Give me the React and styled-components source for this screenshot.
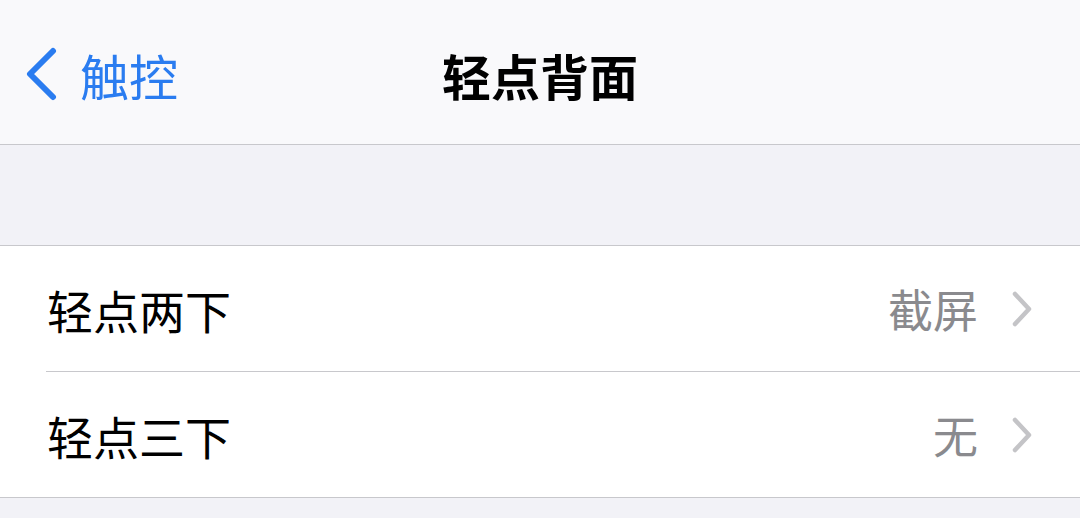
import React from 'react';
import styled, { createGlobalStyle } from 'styled-components';

//------------- Styling -------------//

const GlobalStyle = createGlobalStyle`
  html, body {
    margin: 0;
    padding: 0;
    background: #f2f2f7;
    font-family: "Noto Sans CJK SC", "Noto Sans", sans-serif;
  }
`;

const Page = styled.div`
  width: 1080px;
  height: 518px;
  overflow: hidden;
  background: #f2f2f7;
`;

const NavBar = styled.header`
  position: relative;
  height: 144px;
  background: #f9f9fb;
  border-bottom: 1px solid #c8c8cc;
  display: flex;
  align-items: center;
  justify-content: center;
`;

const BackButton = styled.div`
  position: absolute;
  left: 24px;
  top: 4px;
  bottom: 0;
  display: flex;
  align-items: center;
  gap: 22px;
  color: #2a7cf0;
  font-size: 49px;
  line-height: 1;
`;

const Title = styled.h1`
  margin: 4px 0 0;
  font-size: 49px;
  font-weight: 700;
  color: #000;
  line-height: 1;
`;

const Spacer = styled.div`
  height: 100px;
`;

const Group = styled.div`
  background: #fff;
  border-top: 1px solid #c8c8cc;
  border-bottom: 1px solid #c8c8cc;
  padding-left: 46px;
`;

const Row = styled.div`
  height: 125px;
  display: flex;
  align-items: center;
  padding-right: 48px;
  border-bottom: ${p => (p.$last ? 'none' : '1px solid #c8c8cc')};
`;

const Label = styled.span`
  flex: 1;
  font-size: 46px;
  color: #000;
  padding-left: 1px;
  line-height: 1;
`;

const Value = styled.span`
  font-size: 45px;
  color: #8a8a8e;
  margin-right: 34px;
  line-height: 1;
`;

//------------- Component -------------//

const BackChevron = () => (
  <svg width="34" height="54" viewBox="0 0 34 54">
    <path d="M29 4 L6 27 L29 50" fill="none" stroke="currentColor" strokeWidth="6" strokeLinecap="round" strokeLinejoin="round" />
  </svg>
);

const Chevron = () => (
  <svg width="20" height="36" viewBox="0 0 20 36">
    <path d="M3 3 L17 18 L3 33" fill="none" stroke="#c4c4c7" strokeWidth="4.5" strokeLinecap="round" strokeLinejoin="round" />
  </svg>
);

const rows = [
  { label: '轻点两下', value: '截屏' },
  { label: '轻点三下', value: '无' },
];

export default function App() {
  return (
    <Page>
      <GlobalStyle />
      <NavBar>
        <BackButton>
          <BackChevron />
          <span>触控</span>
        </BackButton>
        <Title>轻点背面</Title>
      </NavBar>
      <Spacer />
      <Group>
        {rows.map((r, i) => (
          <Row key={r.label} $last={i === rows.length - 1}>
            <Label>{r.label}</Label>
            <Value>{r.value}</Value>
            <Chevron />
          </Row>
        ))}
      </Group>
    </Page>
  );
}
